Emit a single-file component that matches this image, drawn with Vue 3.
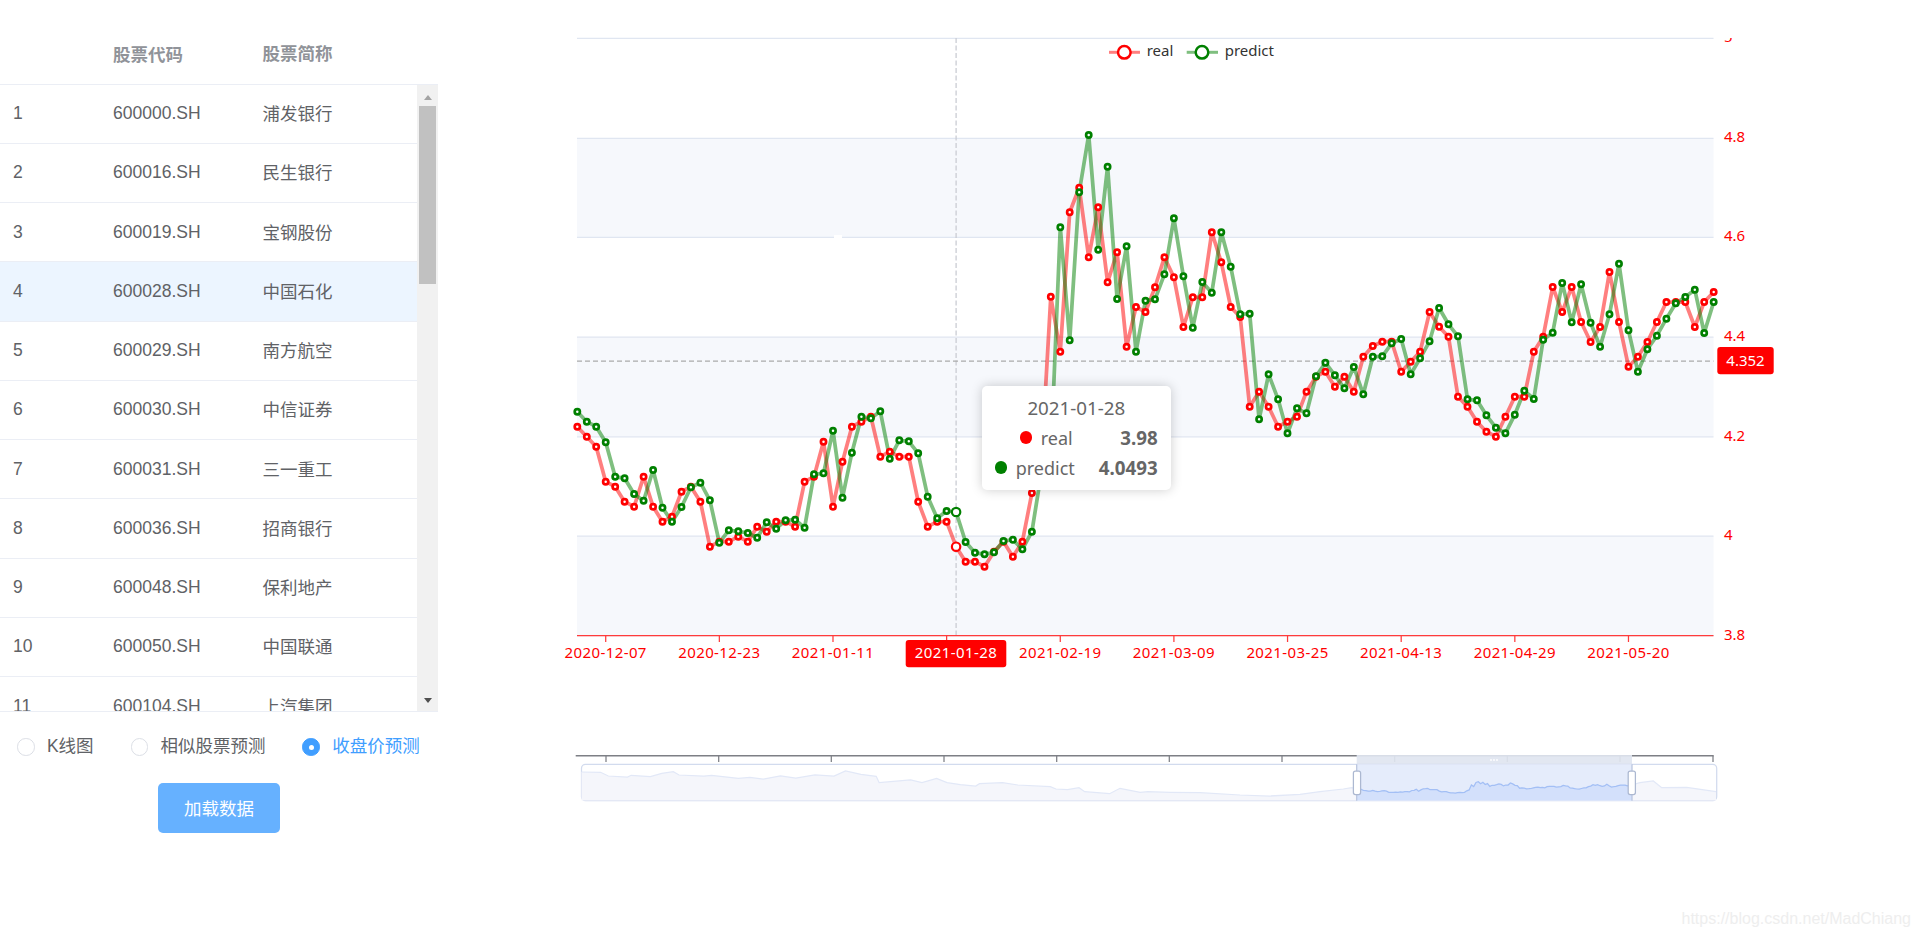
<template>
  <div class="page">
    <div class="side">
      <div class="table">
        <div class="head">
          <div class="col-no"></div>
          <div class="col-code">股票代码</div>
          <div class="col-name">股票简称</div>
        </div>
        <div class="table-body">
          <div class="rows">
            <div v-for="(s, i) in stocks" :key="s.code" class="row" :class="{ current: i === 3 }">
              <div class="col-no">{{ i + 1 }}</div>
              <div class="col-code">{{ s.code }}</div>
              <div class="col-name">{{ s.name }}</div>
            </div>
          </div>
          <div class="scrollbar">
            <span class="arrow-up"></span>
            <div class="thumb"></div>
            <span class="arrow-down"></span>
          </div>
        </div>
      </div>
      <div class="radios">
        <label v-for="r in radios" :key="r" class="radio" :class="{ checked: r === '收盘价预测' }">
          <span class="radio-dot"></span>
          <span class="radio-label">{{ r }}</span>
        </label>
      </div>
      <div class="btn-wrap">
        <button class="load-btn">加载数据</button>
      </div>
    </div>

    <div class="chart">
      <!-- viewBox uses page coordinates, easier to compare with the screenshot -->
      <svg class="chart-svg" viewBox="438 0 1482 938" width="1482" height="938">
        <defs>
          <clipPath id="grid-clip">
            <rect x="438" y="38" width="1482" height="900" />
          </clipPath>
        </defs>
        <rect v-for="b in bands" :key="b" x="577" :y="b" width="1136.5" height="99.6" fill="#f6f8fc" />
        <line v-for="v in yTicks" :key="v.label" x1="577" x2="1713.5" :y1="v.y" :y2="v.y" stroke="#e0e6f1" stroke-width="1.25" />
        <rect x="834" y="235" width="8" height="3" fill="#fff" />

        <!-- the top label is cut by the canvas in the original -->
        <g clip-path="url(#grid-clip)">
          <text v-for="v in yTicks" :key="'l' + v.label" x="1724" :y="v.y + 4" class="axis-text">{{ v.label }}</text>
        </g>

        <line x1="577" x2="1713.5" y1="635.7" y2="635.7" stroke="#ff3b3b" stroke-width="1.25" />
        <line v-for="t in xTicks" :key="t.i" :x1="t.x" :x2="t.x" y1="635.7" y2="642" stroke="#ff3b3b" stroke-width="1.25" />
        <text v-for="t in xLabels" :key="t.label" :x="t.x" y="658" text-anchor="middle" class="axis-text date">{{ t.label }}</text>

        <!-- axis pointer -->
        <line x1="956.1" x2="956.1" y1="38" y2="635" stroke="#c8cbd2" stroke-width="1.25" stroke-dasharray="5 2.5" />
        <line x1="577" x2="1713.5" y1="361" y2="361" stroke="#aaa" stroke-width="1.25" stroke-dasharray="5 3" />
        <rect x="905.7" y="640" width="100.6" height="27.3" rx="3" fill="#f00" />
        <text x="956" y="658" text-anchor="middle" class="axis-text date white">2021-01-28</text>
        <rect x="1717.3" y="347" width="56.4" height="27.3" rx="3" fill="#f00" />
        <text x="1745.5" y="366" text-anchor="middle" class="axis-text white">4.352</text>

        <!-- series -->
        <polyline :points="redLine" fill="none" stroke="#f00" stroke-opacity="0.5" stroke-width="3.75" stroke-linejoin="bevel" />
        <polyline :points="greenLine" fill="none" stroke="#008000" stroke-opacity="0.5" stroke-width="3.75" stroke-linejoin="bevel" />
        <circle v-for="p in redPts" :key="'r' + p.i" :cx="p.x" :cy="p.y" :r="p.i === 40 ? 4.2 : 2.6" fill="#fff" stroke="#f00" :stroke-width="p.i === 40 ? 2.2 : 2.7" />
        <circle v-for="p in greenPts" :key="'g' + p.i" :cx="p.x" :cy="p.y" :r="p.i === 40 ? 4.2 : 2.6" fill="#fff" stroke="#008000" :stroke-width="p.i === 40 ? 2.2 : 2.7" />

        <!-- legend -->
        <line x1="1109" x2="1140" y1="52.3" y2="52.3" stroke="#f00" stroke-opacity="0.5" stroke-width="3" />
        <circle cx="1124.3" cy="52.3" r="6.3" fill="#fff" stroke="#f00" stroke-width="2.5" />
        <text x="1146.7" y="55.5" class="legend-text">real</text>
        <line x1="1186.7" x2="1218" y1="52.3" y2="52.3" stroke="#008000" stroke-opacity="0.5" stroke-width="3" />
        <circle cx="1202" cy="52.3" r="6.3" fill="#fff" stroke="#008000" stroke-width="2.5" />
        <text x="1224.7" y="55.5" class="legend-text">predict</text>

        <!-- slider -->
        <line x1="575.7" x2="1713.7" y1="755.7" y2="755.7" stroke="#7d7f85" stroke-width="1.5" />
        <line v-for="t in sliderTicks" :key="t" :x1="t" :x2="t" y1="755.7" y2="762" stroke="#7d7f85" stroke-width="1.25" />
        <rect x="1356.7" y="755" width="275.3" height="9.3" fill="#dfe5f0" fill-opacity="0.92" />
        <circle v-for="d in [1491, 1494, 1497]" :key="d" :cx="d" cy="760" r="0.9" fill="#fff" />
        <rect x="581.5" y="764.3" width="1135.2" height="36.4" rx="4" fill="#fff" stroke="#d2dbee" stroke-width="1.25" />
        <polygon :points="shadowArea" fill="#f5f6fb" />
        <polyline :points="shadowLine" fill="none" stroke="#e2e8f7" stroke-width="1.25" />
        <rect x="1356.7" y="764.3" width="275.3" height="36.4" fill="#e5ecfb" />
        <polygon :points="selArea" fill="#d3e0fb" />
        <polyline :points="selLine" fill="none" stroke="#a3bff5" stroke-width="1.25" />
        <line x1="1356.7" x2="1356.7" y1="764.3" y2="800.7" stroke="#b8c4de" stroke-width="1.25" />
        <line x1="1632" x2="1632" y1="764.3" y2="800.7" stroke="#b8c4de" stroke-width="1.25" />
        <rect x="1353.4" y="771" width="7.2" height="23.5" rx="2" fill="#fff" stroke="#acb8d1" stroke-width="1.25" />
        <rect x="1628.2" y="771" width="7.2" height="23.5" rx="2" fill="#fff" stroke="#acb8d1" stroke-width="1.25" />
      </svg>

      <div class="tooltip">
        <div class="tip-title">2021-01-28</div>
        <div class="tip-row" v-for="t in tipRows" :key="t.name">
          <span class="tip-dot" :style="{ background: t.color }"></span>
          <span>{{ t.name }}</span>
          <div class="tip-val">{{ t.value }}</div>
        </div>
      </div>
    </div>

    <div class="watermark">https://blog.csdn.net/MadChiang</div>
  </div>
</template>

<script setup>
const stocks = [
  { code: '600000.SH', name: '浦发银行' },
  { code: '600016.SH', name: '民生银行' },
  { code: '600019.SH', name: '宝钢股份' },
  { code: '600028.SH', name: '中国石化' },
  { code: '600029.SH', name: '南方航空' },
  { code: '600030.SH', name: '中信证券' },
  { code: '600031.SH', name: '三一重工' },
  { code: '600036.SH', name: '招商银行' },
  { code: '600048.SH', name: '保利地产' },
  { code: '600050.SH', name: '中国联通' },
  { code: '600104.SH', name: '上汽集团' }
]

const radios = ['K线图', '相似股票预测', '收盘价预测']

const tipRows = [
  { name: 'real', value: '3.98', color: '#f00' },
  { name: 'predict', value: '4.0493', color: '#008000' }
]

const bands = [138.3, 337, 536.1]
const yTicks = [
  { label: '5', y: 38.3 },
  { label: '4.8', y: 138.3 },
  { label: '4.6', y: 237.4 },
  { label: '4.4', y: 337 },
  { label: '4.2', y: 436.8 },
  { label: '4', y: 536.1 },
  { label: '3.8', y: 635.7 }
]

const X0 = 577.3
const STEP = 9.47
const xAt = (i) => X0 + STEP * i

const dates = ['2020-12-07', '2020-12-23', '2021-01-11', '', '2021-02-19', '2021-03-09', '2021-03-25', '2021-04-13', '2021-04-29', '2021-05-20']
const xTicks = dates.map((_, n) => ({ i: 3 + n * 12, x: xAt(3 + n * 12) }))
const xLabels = dates
  .map((label, n) => ({ label, x: xAt(3 + n * 12) }))
  .filter((d) => d.label)

const sliderTicks = [606, 718.7, 831.3, 944, 1056.7, 1169.3, 1282, 1394.7, 1507.3, 1620, 1713]

// pixel y of each point, read from the screenshot
const redY = [
  426.7, 436.7, 446.7, 481.7, 486.7, 501.7, 506.7, 476.7, 506.7, 521.7,
  516.7, 491.7, 486.7, 501.7, 546.7, 541.7, 541.7, 536.7, 541.7, 526.7,
  531.7, 521.7, 521.7, 526.7, 481.7, 476.7, 441.7, 506.7, 461.7, 426.7,
  421.7, 416.7, 456.7, 451.7, 456.7, 456.7, 501.7, 526.7, 521.7, 521.7,
  546.7, 561.7, 561.7, 566.7, 551.7, 541.7, 556.7, 541.7, 493, 463,
  296.7, 351.7, 212.3, 187.7, 257.3, 207.3, 282.3, 252.3, 346.7, 307,
  312, 287.3, 257.3, 277.3, 327, 297.3, 297.3, 232.3, 262.3, 307,
  317, 406.7, 391.7, 406.7, 426.7, 421.7, 416.7, 391.7, 376.7, 371.7,
  386.7, 376.7, 391.7, 356.7, 346, 341.7, 341.7, 371.7, 361.7, 351.7,
  312, 326.7, 336.7, 396.7, 406.7, 421.7, 431.7, 436.7, 416.7, 396.7,
  396.7, 351.7, 336.7, 287, 312, 287, 322, 342, 327, 272,
  322, 366.7, 356.7, 342, 322, 302, 302, 302, 327, 302,
  292
]
const greenY = [
  411.7, 421.7, 426.7, 442.3, 476.7, 478.3, 494, 500.7, 470, 507.7,
  521.7, 507, 487.3, 482.7, 500.3, 542.7, 530.3, 531.3, 533, 537.7,
  522.3, 528.7, 520.3, 519.7, 527.7, 474.3, 473.3, 430.7, 497.7, 452.7,
  416.7, 418.3, 411.3, 458.7, 440.3, 441.3, 453.3, 496.7, 518.3, 511,
  512, 542, 552.7, 554.3, 552.3, 541, 539.7, 549.3, 531.7, 473,
  457, 227.3, 340.3, 192.3, 135, 249.7, 166.7, 299, 246.3, 351.7,
  300.7, 299.3, 274.3, 218.3, 276.3, 327.7, 282, 292.7, 232.3, 266.7,
  314.3, 313.7, 419.3, 374.3, 399.3, 433.3, 408.3, 413.3, 376.3, 362.7,
  375.3, 388.3, 367, 394.3, 356.7, 356.3, 343.3, 339, 374.3, 358.3,
  341.3, 308, 324.3, 336.3, 399.3, 400.3, 415.3, 427.7, 433.3, 414.7,
  390.7, 399, 339.7, 332.7, 283, 322.3, 284.3, 322.7, 346.7, 314.3,
  263.7, 330.3, 371.7, 349.3, 335.7, 318.7, 303.3, 297, 289.7, 333,
  302
]

const toPts = (ys) => ys.map((y, i) => ({ i, x: +xAt(i).toFixed(1), y }))
const redPts = toPts(redY)
const greenPts = toPts(greenY)
const ptsStr = (pts) => pts.map((p) => `${p.x},${p.y}`).join(' ')
const redLine = ptsStr(redPts)
const greenLine = ptsStr(greenPts)

// slider data shadow: [x, y] in page pixels
const shadowRaw = [
  [581.5, 772], [600.6, 772.3], [608.3, 776], [627.4, 777], [631.2, 775.3], [650.4, 776.7],
  [661.8, 773.3], [673.3, 771.7], [679, 775], [703.9, 776], [711.6, 775.3], [738.4, 778.3],
  [749.9, 777.3], [763.3, 779], [780.5, 776], [795.8, 778], [814.9, 775], [834, 776],
  [845.5, 771], [860.9, 774.3], [876.2, 776.3], [879.2, 782.7], [910.6, 780], [922, 782.7],
  [936.6, 778.3], [947, 782.7], [960.4, 784.7], [975.7, 786], [979.5, 783.7], [1002.5, 782.7],
  [1017.8, 785], [1050.3, 786.7], [1056, 789], [1067.5, 789.7], [1079, 787.7], [1084.7, 791.7],
  [1109.6, 793.7], [1120, 788.3], [1140.2, 792.3], [1147.9, 791.7], [1170, 792.3],
  [1200, 792.7], [1240, 795], [1270, 796], [1300, 794.3], [1320, 791.7], [1343.3, 789], [1351.7, 787.7]
]
// the selected part of the slider is the red series itself, squeezed
const selRaw = redY.map((y, i) => [
  +(1356.7 + (i * 275.3) / 120).toFixed(1),
  +(781.7 + ((y - 187.7) * 11.3) / 379).toFixed(1)
])
const afterRaw = [[1640, 782.7], [1653.3, 781], [1661.7, 787.7], [1686.7, 787.3], [1716, 791.7]]
const BOTTOM = 800.4
const toStr = (arr) => arr.map((p) => p.join(',')).join(' ')
const withBase = (arr) => `${arr[0][0]},${BOTTOM} ${toStr(arr)} ${arr[arr.length - 1][0]},${BOTTOM}`
const shadowAll = [...shadowRaw, ...selRaw, ...afterRaw]
const shadowLine = toStr(shadowAll)
const shadowArea = withBase(shadowAll)
const selLine = toStr(selRaw)
const selArea = withBase(selRaw)
</script>

<style scoped>
.page {
  display: flex;
  height: 938px;
  overflow: hidden;
  position: relative;
  background: #fff;
  font-family: "Liberation Sans", "Noto Sans CJK SC", sans-serif;
}

.side {
  width: 438px;
  flex-shrink: 0;
  color: #606266;
  font-size: 17.5px;
}

.table {
  border-bottom: 1.5px solid #ebeef5;
}

.head {
  display: flex;
  align-items: center;
  height: 83.5px;
  box-sizing: border-box;
  padding-top: 23px;
  color: #909399;
  font-weight: 700;
}

.table-body {
  display: flex;
  height: 627.5px;
  border-top: 1.25px solid #ebeef5;
  box-sizing: border-box;
}

.rows {
  flex: 1;
  overflow: hidden;
}

.row {
  display: flex;
  align-items: center;
  height: 59.25px;
  box-sizing: border-box;
  border-bottom: 1.25px solid #ebeef5;
}

.row.current {
  background: #ecf5ff;
}

.col-no {
  width: 113px;
  padding-left: 13px;
  box-sizing: border-box;
}

.col-code {
  width: 149.5px;
}

.col-name {
  width: 154px;
  padding-bottom: 2px;
}

.scrollbar {
  width: 21px;
  background: #f1f1f1;
  display: flex;
  flex-direction: column;
  align-items: center;
}

.arrow-up {
  width: 0;
  height: 0;
  margin-top: 10px;
  border-left: 4.5px solid transparent;
  border-right: 4.5px solid transparent;
  border-bottom: 5px solid #a3a3a3;
}

.thumb {
  width: 17px;
  height: 178px;
  margin-top: 6px;
  background: #c1c1c1;
}

.arrow-down {
  width: 0;
  height: 0;
  margin-top: auto;
  margin-bottom: 8px;
  border-left: 4.5px solid transparent;
  border-right: 4.5px solid transparent;
  border-top: 5px solid #505050;
}

.radios {
  display: flex;
  align-items: center;
  gap: 37px;
  padding: 24px 0 0 17px;
}

.radio {
  display: flex;
  align-items: center;
  gap: 12.4px;
  line-height: 20px;
}

.radio-label {
  padding-bottom: 2px;
}

.radio-dot {
  width: 17.5px;
  height: 17.5px;
  box-sizing: border-box;
  border: 1.25px solid #dcdfe6;
  border-radius: 50%;
  display: flex;
  align-items: center;
  justify-content: center;
}

.radio.checked {
  color: #409eff;
}

.radio.checked .radio-dot {
  background: #409eff;
  border-color: #409eff;
}

.radio.checked .radio-dot::after {
  content: "";
  width: 5px;
  height: 5px;
  border-radius: 50%;
  background: #fff;
}

.btn-wrap {
  padding: 25px 0 0 158px;
}

.load-btn {
  display: block;
  width: 122px;
  height: 50px;
  padding: 0 0 2px;
  border: none;
  border-radius: 5px;
  background: #66b1ff;
  color: #fff;
  font-family: inherit;
  font-size: 17.5px;
}

.chart {
  position: relative;
  flex: 1;
}

.chart-svg {
  display: block;
}

.axis-text {
  font-family: "Noto Sans", sans-serif;
  font-size: 15px;
  fill: #f00;
}

.date {
  letter-spacing: 0.4px;
}

.axis-text.white {
  fill: #fff;
}

.legend-text {
  font-family: "Noto Sans", sans-serif;
  font-size: 15px;
  fill: #333;
}

.tooltip {
  position: absolute;
  left: 543.7px;
  top: 386px;
  width: 189.3px;
  height: 104px;
  box-sizing: border-box;
  padding: 9px 13.3px 0 0;
  background: #fff;
  border-radius: 5px;
  box-shadow: 0 0 12px rgba(0, 0, 0, 0.2);
  color: #666;
  font-family: "Noto Sans", sans-serif;
  font-size: 18px;
}

.tip-title {
  height: 26px;
  line-height: 26px;
  margin-bottom: 1.7px;
  text-align: center;
  padding-left: 13.3px;
  font-size: 18.75px;
}

.tip-row {
  display: flex;
  align-items: center;
  gap: 8.5px;
  height: 30px;
  padding-left: 13px;
}

.tip-title + .tip-row {
  padding-left: 38px;
}

.tip-dot {
  width: 12.5px;
  height: 12.5px;
  border-radius: 50%;
}

.tip-val {
  flex: 1;
  text-align: right;
  font-weight: 700;
  font-size: 18.75px;
}

.watermark {
  position: absolute;
  right: 9px;
  top: 910px;
  color: #eeeeee;
  font-size: 16px;
}
</style>

<style>
html, body {
  margin: 0;
  overflow: hidden;
}
</style>
